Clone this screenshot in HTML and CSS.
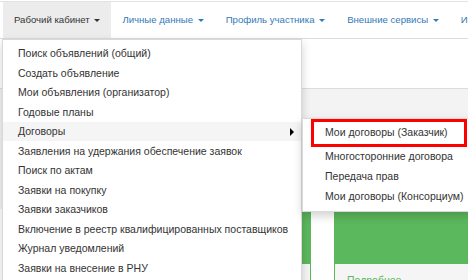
FILE: index.html
```
<!DOCTYPE html>
<html lang="ru">
<head>
    <meta charset="UTF-8">
    <title>Рабочий кабинет</title>
    <link rel="stylesheet" href="styles.css">
</head>
<body>
    <nav class="navbar">
        <ul class="nav">
            <li class="nav-item open">
                <a class="nav-link active">Рабочий кабинет <span class="caret"></span></a>
                <ul class="dropdown-menu">
                    <li><a>Поиск объявлений (общий)</a></li>
                    <li><a>Создать объявление</a></li>
                    <li><a>Мои объявления (организатор)</a></li>
                    <li><a>Годовые планы</a></li>
                    <li class="dropdown-submenu">
                        <a class="hover">Договоры <span class="arrow"></span></a>
                        <ul class="submenu">
                            <li class="marked"><a>Мои договоры (Заказчик)</a></li>
                            <li><a>Многосторонние договора</a></li>
                            <li><a>Передача прав</a></li>
                            <li><a>Мои договоры (Консорциум)</a></li>
                        </ul>
                    </li>
                    <li><a>Заявления на удержания обеспечение заявок</a></li>
                    <li><a>Поиск по актам</a></li>
                    <li><a>Заявки на покупку</a></li>
                    <li><a>Заявки заказчиков</a></li>
                    <li><a>Включение в реестр квалифицированных поставщиков</a></li>
                    <li><a>Журнал уведомлений</a></li>
                    <li><a>Заявки на внесение в РНУ</a></li>
                </ul>
            </li>
            <li class="nav-item"><a class="nav-link">Личные данные <span class="caret"></span></a></li>
            <li class="nav-item"><a class="nav-link">Профиль участника <span class="caret"></span></a></li>
            <li class="nav-item"><a class="nav-link">Внешние сервисы <span class="caret"></span></a></li>
            <li class="nav-item"><a class="nav-link">Информация <span class="caret"></span></a></li>
        </ul>
    </nav>

    <div class="page">
        <div class="page-head"></div>
        <div class="page-band"></div>
        <div class="cards">
            <div class="card">
                <div class="card-top"></div>
                <div class="card-foot"><a>Подробнее</a></div>
            </div>
            <div class="card">
                <div class="card-top"></div>
                <div class="card-foot"><a>Подробнее</a></div>
            </div>
        </div>
    </div>
</body>
</html>
```

FILE: styles.css
```
body {
    margin: 0;
    font-family: "Liberation Sans", Arial, sans-serif;
    font-size: 10.5px;
    color: #333;
    background-color: #fff;
    overflow: hidden;
}
ul {
    list-style: none;
    margin: 0;
    padding: 0;
}
a {
    cursor: pointer;
}
.navbar {
    border-top: 1px solid #e3e3e3;
    border-bottom: 1px solid #dcdcdc;
    margin-top: 1px;
    padding-left: 3px;
    background-color: #fff;
    position: relative;
    z-index: 5;
}
.nav {
    display: flex;
    white-space: nowrap;
}
.nav-item {
    position: relative;
}
.nav-link {
    display: block;
    padding: 0 11px;
    line-height: 36px;
    font-size: 9.6px;
    color: #337ab7;
}
.nav-link.active {
    background-color: #ececec;
    color: #333;
}
.caret {
    display: inline-block;
    width: 0;
    height: 0;
    margin-left: 2px;
    vertical-align: middle;
    border-top: 3px solid;
    border-left: 3px solid transparent;
    border-right: 3px solid transparent;
}

/* dropdown of the first item */
.dropdown-menu {
    position: absolute;
    top: 37px;
    left: -1px;
    width: 298px;
    padding: 3.75px 0;
    background-color: #fff;
    border: 1px solid rgba(0, 0, 0, 0.15);
    box-shadow: 0 4px 9px rgba(0, 0, 0, 0.18);
}
.dropdown-menu > li > a {
    display: block;
    padding: 2.25px 15px;
    line-height: 15px;
    color: #333;
}
.dropdown-menu > li > a.hover {
    background-color: #f5f5f5;
}
.dropdown-submenu {
    position: relative;
}
.arrow {
    position: absolute;
    right: 7px;
    top: 6px;
    width: 0;
    height: 0;
    border-left: 4px solid #000;
    border-top: 4px solid transparent;
    border-bottom: 4px solid transparent;
}
.submenu {
    position: absolute;
    top: -4px;
    left: 299px;
    width: 170px;
    padding: 0 0 3.75px;
    background-color: #fff;
    border: 1px solid rgba(0, 0, 0, 0.15);
    box-shadow: 0 4px 9px rgba(0, 0, 0, 0.18);
}
.submenu a {
    display: block;
    padding: 2.25px 22px;
    line-height: 15.5px;
    color: #333;
}
.submenu .marked {
    margin: 0 6px 0 8px;
    border: 3px solid #f00;
}
.submenu .marked a {
    padding: 3.25px 11px;
}

/* page behind the menus */
.page-head {
    height: 49px;
    border-bottom: 1px solid #dcdcdc;
}
.page-band {
    height: 120px;
    background-color: #f3f3f3;
}
.cards {
    display: flex;
    gap: 23px;
    padding-left: 159px;
}
.card {
    flex: 0 0 150px;
    border: 1px solid #5cb85c;
}
.card-top {
    height: 54px;
    background-color: #5cb85c;
}
.card-foot {
    padding: 10px 12px;
    background-color: #f5f5f5;
}
.card-foot a {
    color: #5cb85c;
}
```
